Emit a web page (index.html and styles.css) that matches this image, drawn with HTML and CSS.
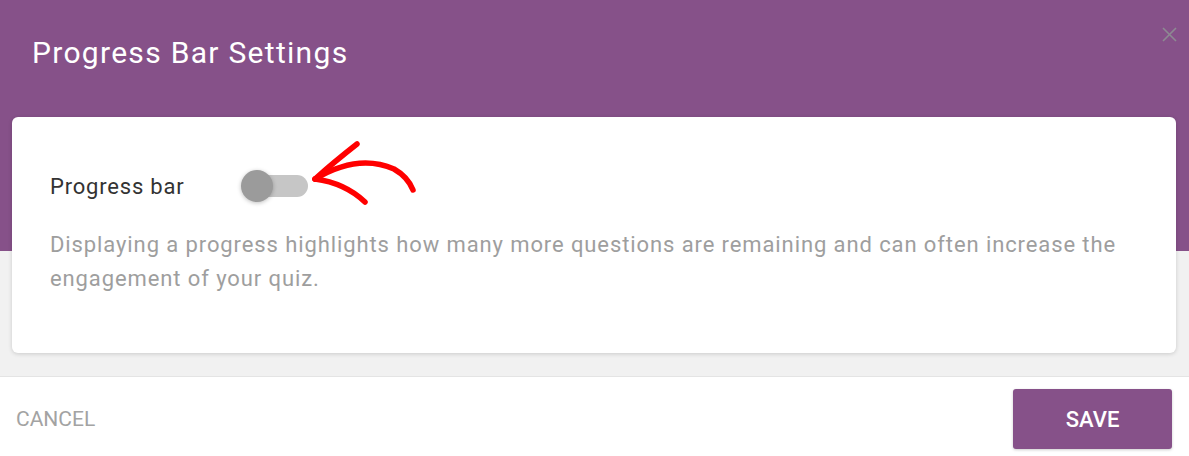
FILE: index.html
```html
<!DOCTYPE html>
<html lang="en">
<head>
  <meta charset="UTF-8">
  <title>Progress Bar Settings</title>
  <meta name="viewport" content="width=device-width, initial-scale=1.0">
  <link rel="stylesheet" href="styles.css">
</head>
<body>
  <div class="modal">
    <div class="modal-header">
      <h2>Progress Bar Settings</h2>
      <button class="close-btn" aria-label="Close">
        <svg width="15" height="15" viewBox="0 0 15 15">
          <path d="M1 1 L14 14 M14 1 L1 14" stroke="#8d8a92" stroke-width="1.6" fill="none"/>
        </svg>
      </button>
    </div>

    <div class="modal-body">
      <div class="card">
        <div class="setting-row">
          <span class="setting-label">Progress bar</span>
          <span class="toggle">
            <span class="toggle-track"></span>
            <span class="toggle-knob"></span>
          </span>
        </div>
        <p class="setting-desc">Displaying a progress highlights how many more questions are remaining and can often increase the engagement of your quiz.</p>

        <!-- annotation arrow pointing at the toggle -->
        <svg class="arrow" width="125" height="80" viewBox="0 0 125 80">
          <g stroke="#ff0000" stroke-width="5.5" stroke-linecap="round" stroke-linejoin="round" fill="none">
            <path d="M57 9 Q34 27 15 44"/>
            <path d="M15 44 Q58 18 94 34 Q108 42 113 55"/>
            <path d="M15 44 Q45 48 65 67"/>
          </g>
        </svg>
      </div>
    </div>

    <div class="modal-footer">
      <button class="btn-cancel">CANCEL</button>
      <button class="btn-save">SAVE</button>
    </div>
  </div>
</body>
</html>
```

FILE: styles.css
```css
body {
  margin: 0;
  font-family: Roboto, 'Liberation Sans', Arial, sans-serif;
  background: #fff;
}
.modal {
  width: 1189px;
  height: 456px;
  display: flex;
  flex-direction: column;
  overflow: hidden;
}
.modal-header {
  background: #865189;
  height: 117px;
  box-sizing: border-box;
  padding: 33px 32px 0 32px;
  position: relative;
}
.modal-header h2 {
  margin: 0;
  color: #fff;
  font-size: 30px;
  font-weight: 400;
  letter-spacing: 1.3px;
  line-height: 40px;
}
.close-btn {
  position: absolute;
  top: 27px;
  right: 12px;
  background: none;
  border: none;
  padding: 0;
  width: 15px;
  height: 15px;
  cursor: pointer;
}
.close-btn svg {
  display: block;
}
.modal-body {
  background: linear-gradient(#865189 0, #865189 134px, #f1f1f1 134px);
  padding: 0 13px 23px 12px;
}
.card {
  position: relative;
  background: #fff;
  border-radius: 6px;
  box-shadow: 0 1px 4px rgba(0,0,0,0.16);
  padding: 52px 38px 57px 38px;
}
.setting-row {
  display: flex;
  align-items: center;
  height: 34px;
}
.setting-label {
  width: 191px;
  font-size: 22px;
  letter-spacing: 0.8px;
  color: #333;
}
.toggle {
  position: relative;
  width: 67px;
  height: 34px;
}
.toggle-track {
  position: absolute;
  left: 12px;
  top: 6px;
  width: 55px;
  height: 22px;
  border-radius: 11px;
  background: #c6c6c6;
}
.toggle-knob {
  position: absolute;
  left: 0;
  top: 1px;
  width: 32px;
  height: 32px;
  border-radius: 50%;
  background: #9b9b9b;
  box-shadow: 0 1px 4px rgba(0,0,0,0.25);
}
.setting-desc {
  margin: 25px 0 0 0;
  font-size: 22px;
  letter-spacing: 0.9px;
  line-height: 34px;
  color: #9e9e9e;
}
.arrow {
  position: absolute;
  left: 288px;
  top: 18px;
}
.modal-footer {
  flex: 1;
  border-top: 1px solid #e4e4e4;
  display: flex;
  justify-content: space-between;
  align-items: flex-start;
  padding: 12px 17px 0 16px;
}
.btn-cancel {
  background: none;
  border: none;
  padding: 0;
  height: 60px;
  font-family: inherit;
  font-size: 21px;
  color: #a3a3a3;
  cursor: pointer;
}
.btn-save {
  width: 159px;
  height: 60px;
  background: #865189;
  color: #fff;
  border: none;
  border-radius: 3px;
  font-family: inherit;
  font-size: 22px;
  font-weight: 500;
  box-shadow: 0 1px 3px rgba(0,0,0,0.2);
  cursor: pointer;
}
```
